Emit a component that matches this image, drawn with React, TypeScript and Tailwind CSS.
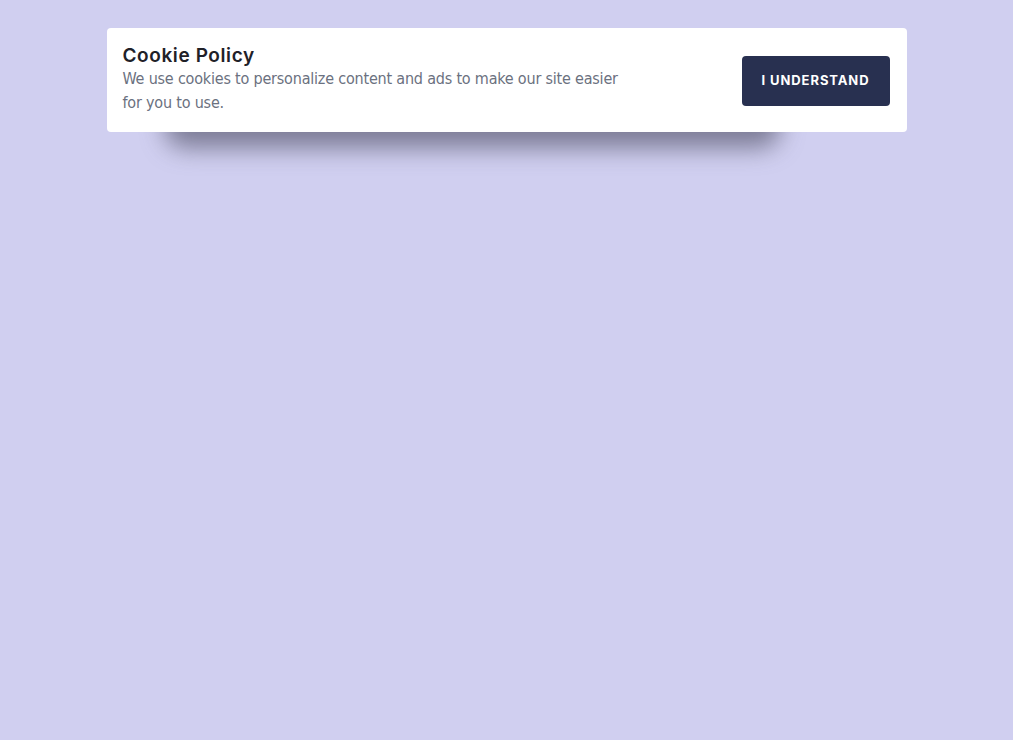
export default function App() {
  return (
    <div className="min-h-screen w-full bg-[#d0cff0] pt-[28px]">
      <div className="relative mx-auto w-[800px]">
        {/* soft drop shadow under the banner */}
        <div className="absolute left-[58px] right-[127px] top-[72px] h-[48px] rounded-[20px] bg-[#45455a]/60 blur-[12px]" />
        <div className="relative flex items-center justify-between rounded-[4px] bg-white pl-4 pr-[17px] pt-[17px] pb-[17px]">
          <div className="w-[505px]">
            <h2 className="text-[19px] font-semibold leading-[22px] tracking-[0.6px] text-[#1f2128] font-['Inter',sans-serif]">
              Cookie Policy
            </h2>
            <p className="text-[16px] leading-[24px] tracking-[-0.2px] text-[#6b7180] font-['DejaVu_Sans_Condensed',sans-serif]">
              We use cookies to personalize content and ads to make our site easier for you to use.
            </p>
          </div>
          <button className="mt-[2px] h-[50px] w-[148px] rounded-[4px] bg-[#283050] text-[13px] font-bold uppercase tracking-[0.07em] text-white font-['Inter',sans-serif]">
            I Understand
          </button>
        </div>
      </div>
    </div>
  );
}
